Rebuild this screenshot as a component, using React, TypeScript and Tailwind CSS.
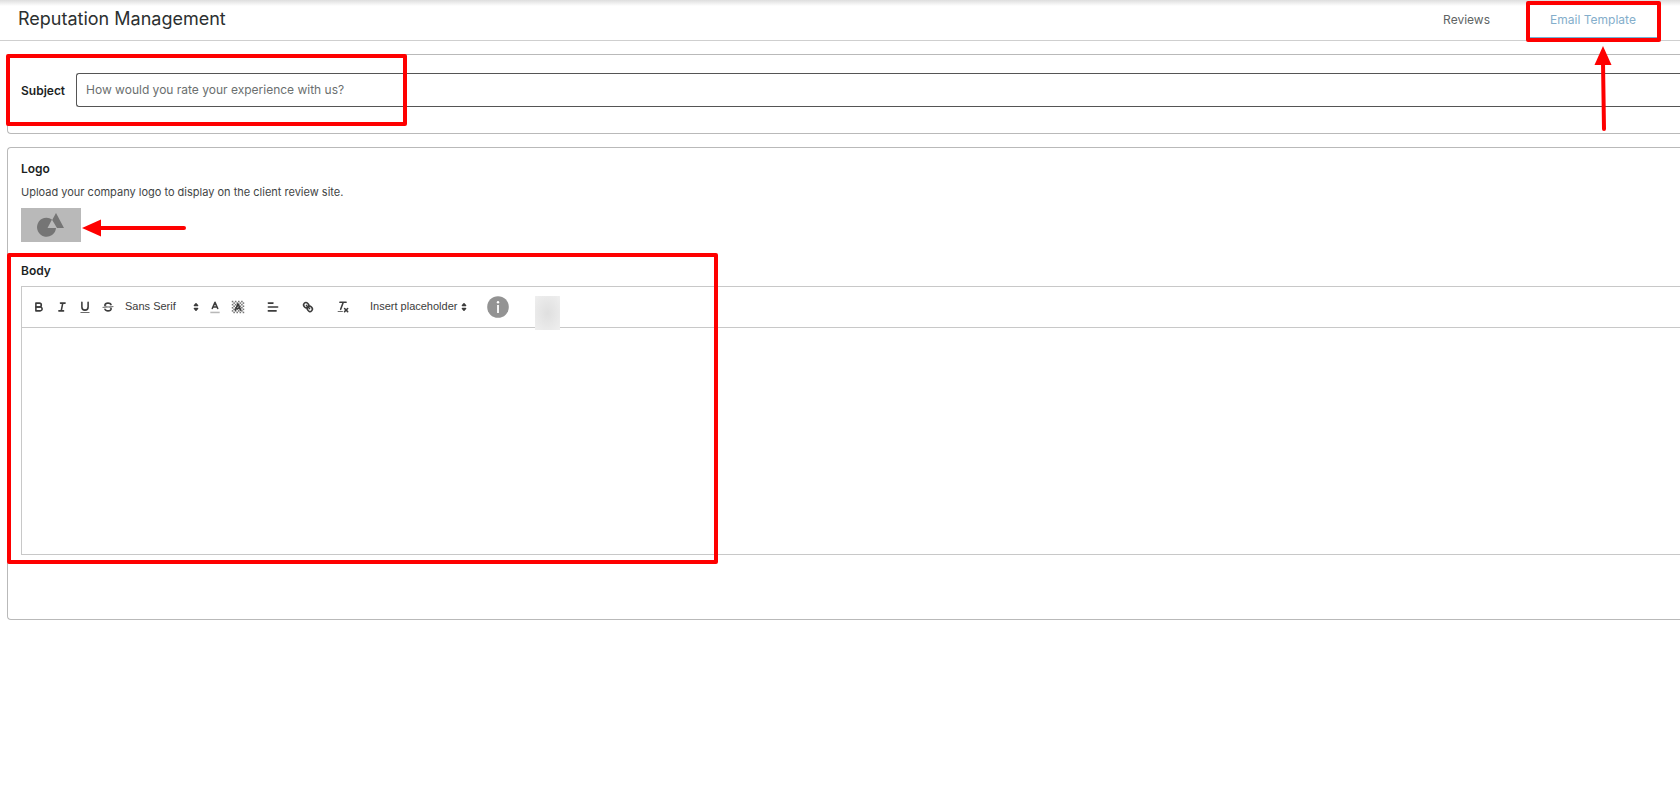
import React from "react";

type IconProps = { children: React.ReactNode; className?: string };

function Icon({ children, className = "size-[14px]" }: IconProps) {
  return (
    <svg
      viewBox="0 0 18 18"
      className={`shrink-0 ${className}`}
      fill="none"
      stroke="#3c3c3c"
      strokeWidth={2}
      strokeLinecap="round"
      strokeLinejoin="round"
      aria-hidden="true"
    >
      {children}
    </svg>
  );
}

function Tool({ label, children }: { label: string; children: React.ReactNode }) {
  return (
    <button type="button" aria-label={label} className="flex h-5 w-[23px] items-center justify-center">
      {children}
    </button>
  );
}

function PickerArrows({ className = "size-[14px]" }: { className?: string }) {
  return (
    <Icon className={`pointer-events-none ${className}`}>
      <g fill="#3c3c3c">
        <polygon points="7 11 9 13 11 11" />
        <polygon points="7 7 9 5 11 7" />
      </g>
    </Icon>
  );
}

const checker = Array.from({ length: 64 }, (_, i) => ({ x: (i % 8) * 2 + 1, y: Math.floor(i / 8) * 2 + 1 })).filter(
  ({ x, y }) => ((x + y) / 2) % 2 === 1,
);

function Toolbar() {
  return (
    <div className="flex h-[41px] items-center border-b border-[#c8c8c8] pl-[5px]">
      <div className="flex items-center">
        <Tool label="Bold">
          <Icon>
            <path d="M5,4H9.5A2.5,2.5,0,0,1,12,6.5v0A2.5,2.5,0,0,1,9.5,9H5V4Z" />
            <path d="M5,9h5.5A2.5,2.5,0,0,1,13,11.5v0A2.5,2.5,0,0,1,10.5,14H5V9Z" />
          </Icon>
        </Tool>
        <Tool label="Italic">
          <Icon>
            <path d="M7 4H13M5 14H11M8 14L10 4" />
          </Icon>
        </Tool>
        <Tool label="Underline">
          <Icon>
            <path d="M5,3V9a4.012,4.012,0,0,0,4,4H9a4.012,4.012,0,0,0,4-4V3" />
            <rect x="3" y="15.5" width="12" height="1" rx="0.5" fill="#3c3c3c" stroke="none" />
          </Icon>
        </Tool>
        <Tool label="Strikethrough">
          <Icon>
            <path d="M15.5 8.5L2.5 9.5" strokeWidth={1} />
            <g fill="#3c3c3c" stroke="none">
              <path d="M9.007,8C6.542,7.791,6,7.519,6,6.5,6,5.792,7.283,5,9,5c1.571,0,2.765.679,2.969,1.309a1,1,0,0,0,1.9-.617C13.356,4.106,11.354,3,9,3,6.2,3,4,4.538,4,6.5a3.2,3.2,0,0,0,.5,1.843Z" />
              <path d="M8.984,10C11.457,10.208,12,10.479,12,11.5c0,0.708-1.283,1.5-3,1.5-1.571,0-2.765-.679-2.969-1.309a1,1,0,1,0-1.9.617C4.644,13.894,6.646,15,9,15c2.8,0,5-1.538,5-3.5a3.2,3.2,0,0,0-.5-1.843Z" />
            </g>
          </Icon>
        </Tool>
      </div>

      <div className="ml-[6px] flex items-center">
        <select
          aria-label="Font"
          className="h-5 w-[64px] appearance-none bg-transparent pb-[2px] font-['Liberation_Sans',sans-serif] text-[11px] text-[#3c3c3c]"
        >
          <option>Sans Serif</option>
        </select>
        <PickerArrows />
      </div>

      <div className="flex items-center">
        <Tool label="Text color">
          <Icon>
            <path d="M3 16H15" stroke="#b8b8b8" strokeLinecap="butt" />
            <path d="M5.5 11L9 3L12.5 11M11.63 9H6.38" />
          </Icon>
        </Tool>
        <Tool label="Background color">
          <Icon>
            <g fill="#777777" stroke="none">
              {checker.map(({ x, y }) => (
                <rect key={`${x}-${y}`} x={x} y={y} width="2" height="2" />
              ))}
            </g>
            <path d="M5.5 13L9 5L12.5 13M11.63 11H6.38" />
          </Icon>
        </Tool>
      </div>

      <div className="ml-3 flex items-center gap-3">
        <Tool label="Align">
          <Icon>
            <path d="M3 9H15M3 14H13M3 4H9" />
          </Icon>
        </Tool>
        <Tool label="Link">
          <Icon>
            <path d="M7 7L11 11" />
            <path d="M8.9,4.577a3.476,3.476,0,0,1,.36,4.679A3.476,3.476,0,0,1,4.577,8.9C3.185,7.5,2.035,6.4,4.217,4.217S7.5,3.185,8.9,4.577Z" />
            <path d="M13.423,9.1a3.476,3.476,0,0,0-4.679-.36,3.476,3.476,0,0,0,.36,4.679c1.392,1.392,2.5,2.542,4.679.36S14.815,10.5,13.423,9.1Z" />
          </Icon>
        </Tool>
        <Tool label="Clear formatting">
          <Icon>
            <path d="M5 3H13M6 12L9.35 3M11 11L15 15M15 11L11 15" />
            <rect x="2" y="14" width="7" height="1" rx="0.5" fill="#3c3c3c" stroke="none" />
          </Icon>
        </Tool>
      </div>

      <div className="ml-4 flex items-center">
        <select
          aria-label="Insert placeholder"
          className="h-5 w-[92px] appearance-none bg-transparent pb-[2px] font-['Liberation_Sans',sans-serif] text-[11px] text-[#3c3c3c]"
        >
          <option>Insert placeholder</option>
        </select>
        <PickerArrows className="-ml-[5px] size-[14px]" />
      </div>

      <button type="button" aria-label="Placeholder help" className="ml-4">
        <svg viewBox="0 0 22 22" className="size-[22px]" aria-hidden="true">
          <circle cx="11" cy="11" r="10.8" fill="#939393" />
          <rect x="10.1" y="9" width="1.8" height="8" fill="#fff" />
          <circle cx="11" cy="6.3" r="1.2" fill="#fff" />
        </svg>
      </button>
      <span className="mt-3 ml-[26px] h-[34px] w-[25px] bg-radial from-[#dfdfdf] to-[#efefef]" />
    </div>
  );
}

export default function App() {
  return (
    <div className="min-h-screen overflow-x-hidden bg-white font-['Inter',sans-serif] text-[#2c3030]">
      <header className="relative z-10 flex h-[41px] items-stretch justify-between border-b border-[#cfcfcf] bg-linear-to-b from-[#dedede] to-white to-15% pr-5">
        <h1 className="pt-[5px] pl-[18px] text-[18px] leading-7">Reputation Management</h1>
        <nav className="flex items-stretch text-[12px]">
          <a href="#reviews" className="px-9 pt-3 leading-4 text-[#606464]">
            Reviews
          </a>
          <a
            href="#email-template"
            aria-current="page"
            className="relative flex w-[134px] justify-center pt-3 leading-4 text-[#84aecb]"
          >
            Email Template
            <span className="absolute top-px -right-px -bottom-[2px] left-0 rounded-[2px] border-4 border-[#fe0000]">
              <span className="absolute inset-x-0 bottom-0 h-px bg-[#6fb3d6]" />
            </span>
            <svg viewBox="0 0 18 88" className="absolute top-[46px] left-[68px] h-[88px] w-[18px]" aria-hidden="true">
              <path d="M9 0L17.5 19H0.500Z" fill="#fe0000" />
              <path d="M9 16L10 83" stroke="#fe0000" strokeWidth="4" strokeLinecap="round" />
            </svg>
          </a>
        </nav>
      </header>

      <main className="flex flex-col gap-[13px] pt-[13px] pl-[7px]">
        <section className="relative flex items-center rounded-l-[4px] border border-r-0 border-[#b9b9b9] pt-[18px] pb-[26px] pl-[13px]">
          <label htmlFor="subject" className="w-[55px] pt-[2px] text-[12px] font-semibold text-[#1c1f1f]">
            Subject
          </label>
          <input
            id="subject"
            type="text"
            placeholder="How would you rate your experience with us?"
            className="h-[34px] flex-1 rounded-l-[3px] border border-r-0 border-[#555555] px-[9px] pb-[2px] text-[12px] placeholder:text-[#6b6f6f]"
          />
          <span className="pointer-events-none absolute -top-px -left-[2px] h-[72px] w-[401px] rounded-[2px] border-4 border-[#fe0000]" />
        </section>

        <section className="rounded-l-[4px] border border-r-0 border-[#b9b9b9] pt-3 pb-16 pl-[13px]">
          <h2 className="text-[12px] leading-[18px] font-semibold text-[#1c1f1f]">Logo</h2>
          <p className="mt-[6px] text-[11px] leading-4 text-[#3f4545]">
            Upload your company logo to display on the client review site.
          </p>
          <div className="mt-2 flex items-center">
            <button type="button" aria-label="Upload logo" className="h-[34px] w-[60px] bg-[#b9b9b9]">
              <svg viewBox="0 0 60 34" className="h-[34px] w-[60px]" aria-hidden="true">
                <path d="M31 11.500A9.500 9.500 0 1 0 35 20H26.500Z" fill="#757575" />
                <path d="M35 5L43 20H36L31.200 12Z" fill="#757575" />
              </svg>
            </button>
            <svg viewBox="0 0 105 18" className="mt-[6px] h-[18px] w-[105px]" aria-hidden="true">
              <path d="M1 9L20 0.500V17.500Z" fill="#fe0000" />
              <path d="M18 9H103" stroke="#fe0000" strokeWidth="4" strokeLinecap="round" />
            </svg>
          </div>

          <div className="relative mt-5">
            <h2 className="text-[12px] leading-[18px] font-semibold text-[#1c1f1f]">Body</h2>
            <div className="mt-[6px] border border-r-0 border-[#c8c8c8]">
              <Toolbar />
              <textarea aria-label="Body" className="block h-[226px] w-full resize-none p-3 text-[12px] outline-none" />
            </div>
            <span className="pointer-events-none absolute -top-[9px] -bottom-[9px] -left-[14px] w-[711px] rounded-[2px] border-4 border-[#fe0000]" />
          </div>
        </section>
      </main>
    </div>
  );
}
